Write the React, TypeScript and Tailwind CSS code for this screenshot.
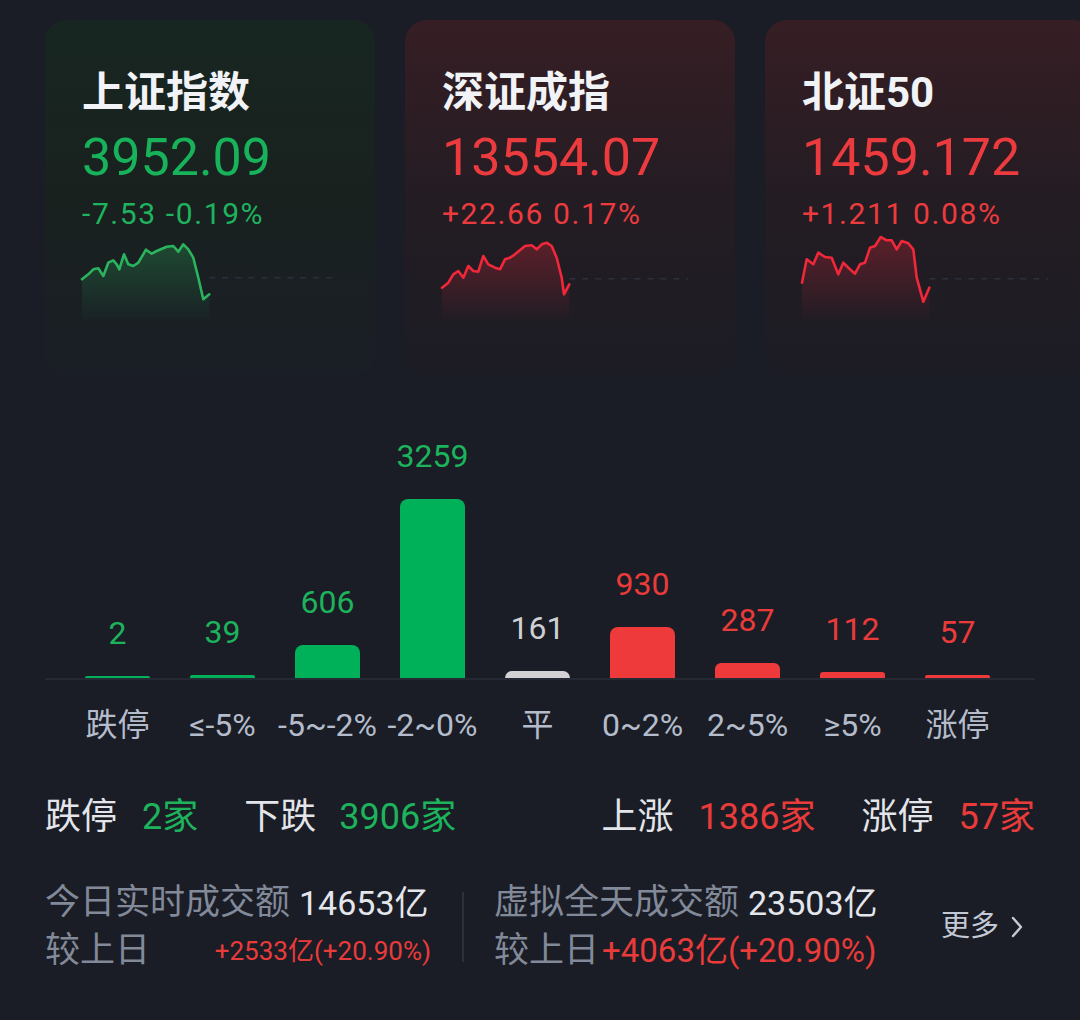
import React from "react";

const FONT = { fontFamily: "Roboto, 'Noto Sans CJK SC', 'Noto Sans', sans-serif" };

type Pt = [number, number];

function Spark({ id, pts, color, dashY, dashEnd }: { id: string; pts: Pt[]; color: string; dashY: number; dashEnd: number }) {
  const line = pts.map((p) => `${p[0]},${p[1]}`).join(" ");
  const lastX = pts[pts.length - 1][0];
  const area = `${line} ${lastX},88 0,88`;
  return (
    <svg width="256" height="92" viewBox="0 0 256 92" className="block overflow-visible">
      <defs>
        <linearGradient id={id} x1="0" y1="0" x2="0" y2="1">
          <stop offset="0%" stopColor={color} stopOpacity="0.28" />
          <stop offset="100%" stopColor={color} stopOpacity="0.02" />
        </linearGradient>
      </defs>
      <line x1={lastX} y1={dashY} x2={dashEnd} y2={dashY} stroke="#2b313c" strokeWidth="1.5" strokeDasharray="6 7" />
      <polygon points={area} fill={`url(#${id})`} />
      <polyline points={line} fill="none" stroke={color} strokeWidth="2.6" strokeLinejoin="round" strokeLinecap="round" />
    </svg>
  );
}

const p1: Pt[] = [[0,48.3],[6.3,43.3],[11.3,38.3],[16.3,37.3],[21.3,45],[26.3,31.7],[31.3,29.3],[34.7,33.3],[37.3,38.3],[42,23.3],[46.3,33.3],[51.3,35],[56.3,31.7],[64,18.7],[69.7,22.7],[74.7,20],[84.7,15.7],[91.3,15],[96.3,20.7],[101.3,13.3],[106.3,18.3],[111.3,26.7],[116.3,46.7],[121.3,68.3],[127.3,63.3]];
const p2: Pt[] = [[0,56.7],[6.3,51.7],[11.3,43.3],[16.3,40],[21.3,46.7],[26.3,35],[31.3,40],[36.3,40.7],[41.3,25],[46.3,33.3],[53,36.7],[58,38.3],[63,28.3],[68,26.7],[73,23.3],[83,15],[89.7,14.3],[94.7,18.3],[99.7,13.3],[104.7,11.7],[109.7,15],[114.7,26.7],[119.7,46.7],[122,63.3],[127.3,53.3]];
const p3: Pt[] = [[0,51.7],[4.7,28.3],[11.3,33.3],[16.3,21.7],[23,26],[29.7,26.7],[36.3,43.3],[41.3,31.7],[48,38.3],[53,42.7],[58,33.3],[63,31.7],[68,16.7],[73,15],[78.7,6],[84.7,9.3],[89.7,9.3],[94.7,18.3],[99.7,10],[106.3,12.3],[111.3,18.3],[114.7,46.7],[121.3,70.7],[127.3,56.7]];

function Card({ title, value, change, up, pts, id, dashY, dashEnd }: { title: string; value: string; change: string; up: boolean; pts: Pt[]; id: string; dashY: number; dashEnd: number }) {
  return (
    <div
      className={
        up
          ? "w-[330px] h-[355px] shrink-0 rounded-[22px] bg-linear-to-b from-[#361e24] via-[#241c23] to-[#1c1c24] pl-[37px] pt-[49px]"
          : "w-[330px] h-[355px] shrink-0 rounded-[22px] bg-linear-to-b from-[#172620] via-[#19211f] to-[#1a1e26] pl-[37px] pt-[49px]"
      }
    >
      <div className="text-[42px] leading-[48px] font-bold text-[#f1f3f6]">{title}</div>
      <div className={up ? "mt-[13px] text-[52px] leading-[56px] text-[#ec3b3e]" : "mt-[13px] text-[52px] leading-[56px] text-[#17b25a]"}>{value}</div>
      <div className={up ? "mt-[11px] text-[30px] leading-[34px] tracking-[1.6px] text-[#ec3b3e]" : "mt-[11px] text-[30px] leading-[34px] tracking-[1.6px] text-[#1fb35e]"}>{change}</div>
      <Spark id={id} pts={pts} color={up ? "#f0283a" : "#2bb45e"} dashY={dashY} dashEnd={dashEnd} />
    </div>
  );
}

const bars = [
  { v: "2", l: "跌停", h: 2, tc: "text-[#1db35c]", bc: "bg-[#00b159] rounded-t-[2px]" },
  { v: "39", l: "≤-5%", h: 3, tc: "text-[#1db35c]", bc: "bg-[#00b159] rounded-t-[2px]" },
  { v: "606", l: "-5~-2%", h: 33, tc: "text-[#1db35c]", bc: "bg-[#00b159] rounded-t-[8px]" },
  { v: "3259", l: "-2~0%", h: 179, tc: "text-[#1db35c]", bc: "bg-[#00b159] rounded-t-[8px]" },
  { v: "161", l: "平", h: 7, tc: "text-[#cfd0d3]", bc: "bg-[#d2d2d4] rounded-t-full" },
  { v: "930", l: "0~2%", h: 51, tc: "text-[#ea3b3b]", bc: "bg-[#ee3a3a] rounded-t-[8px]" },
  { v: "287", l: "2~5%", h: 15, tc: "text-[#ea3b3b]", bc: "bg-[#ee3a3a] rounded-t-[6px]" },
  { v: "112", l: "≥5%", h: 6, tc: "text-[#ea3b3b]", bc: "bg-[#ee3a3a] rounded-t-[3px]" },
  { v: "57", l: "涨停", h: 3, tc: "text-[#ea3b3b]", bc: "bg-[#ee3a3a] rounded-t-[2px]" },
];

export default function App() {
  return (
    <div className="w-[1080px] h-[1020px] overflow-hidden bg-[#1a1d25]" style={FONT}>
      <div className="flex gap-[30px] pl-[45px] pt-[20px] overflow-hidden">
        <Card title="上证指数" value="3952.09" change="-7.53 -0.19%" up={false} pts={p1} id="g1" dashY={46.7} dashEnd={256} />
        <Card title="深证成指" value="13554.07" change="+22.66 0.17%" up={true} pts={p2} id="g2" dashY={47.7} dashEnd={246} />
        <Card title="北证50" value="1459.172" change="+1.211 0.08%" up={true} pts={p3} id="g3" dashY={47.7} dashEnd={246} />
      </div>

      <div className="mx-[45px] mt-[55px]">
        <div className="flex items-end h-[250px] px-[20px] border-b-2 border-[#252934]">
          {bars.map((b) => (
            <div key={b.l} className="w-[105px] flex flex-col items-center justify-end">
              <div className={`text-[32px] leading-[36px] mb-[25px] ${b.tc}`}>{b.v}</div>
              <div className={`w-[65px] ${b.bc}`} style={{ height: b.h }} />
            </div>
          ))}
        </div>
        <div className="flex px-[20px] mt-[25px]">
          {bars.map((b) => (
            <div key={b.l} className="w-[105px] flex justify-center text-[32px] leading-[40px] text-[#b4bccb] whitespace-nowrap">
              {b.l}
            </div>
          ))}
        </div>
      </div>

      <div className="flex justify-between items-center px-[45px] mt-[50px] text-[36px] leading-[44px]">
        <div className="flex items-center">
          <span className="text-[#e3e5ea]">跌停</span>
          <span className="ml-[25px] text-[#1db35c]">2家</span>
          <span className="ml-[46px] text-[#e3e5ea]">下跌</span>
          <span className="ml-[23px] text-[#1db35c]">3906家</span>
        </div>
        <div className="flex items-center">
          <span className="text-[#e3e5ea]">上涨</span>
          <span className="ml-[25px] text-[#ea3b3b]">1386家</span>
          <span className="ml-[46px] text-[#e3e5ea]">涨停</span>
          <span className="ml-[25px] text-[#ea3b3b]">57家</span>
        </div>
      </div>

      <div className="flex items-center px-[45px] mt-[40px]">
        <div className="flex flex-col w-[386px]">
          <div className="flex items-center text-[35px] leading-[48px] whitespace-nowrap">
            <span className="text-[#828a9a]">今日实时成交额</span>
            <span className="ml-[9px] text-[#e4e6ec] text-[34px]">14653亿</span>
          </div>
          <div className="flex items-center justify-between leading-[48px] whitespace-nowrap">
            <span className="text-[35px] text-[#828a9a]">较上日</span>
            <span className="text-[26px] text-[#ea3b3b]">+2533亿(+20.90%)</span>
          </div>
        </div>
        <div className="w-[2px] h-[70px] bg-[#2c303a] ml-[31px] mr-[30px]" />
        <div className="flex flex-col">
          <div className="flex items-center text-[35px] leading-[48px] whitespace-nowrap">
            <span className="text-[#828a9a]">虚拟全天成交额</span>
            <span className="ml-[9px] text-[#e4e6ec] text-[34px]">23503亿</span>
          </div>
          <div className="flex items-center leading-[48px] whitespace-nowrap">
            <span className="text-[35px] text-[#828a9a]">较上日</span>
            <span className="ml-[3px] text-[33px] text-[#ea3b3b]">+4063亿(+20.90%)</span>
          </div>
        </div>
        <div className="ml-auto flex items-center gap-[12px] text-[29px] text-[#c3c9d4] mr-[12px]">
          <span>更多</span>
          <svg width="12" height="22" viewBox="0 0 12 22" fill="none">
            <path d="M2 2 L10 11 L2 20" stroke="#c3c9d4" strokeWidth="2.4" strokeLinecap="round" strokeLinejoin="round" />
          </svg>
        </div>
      </div>
    </div>
  );
}
